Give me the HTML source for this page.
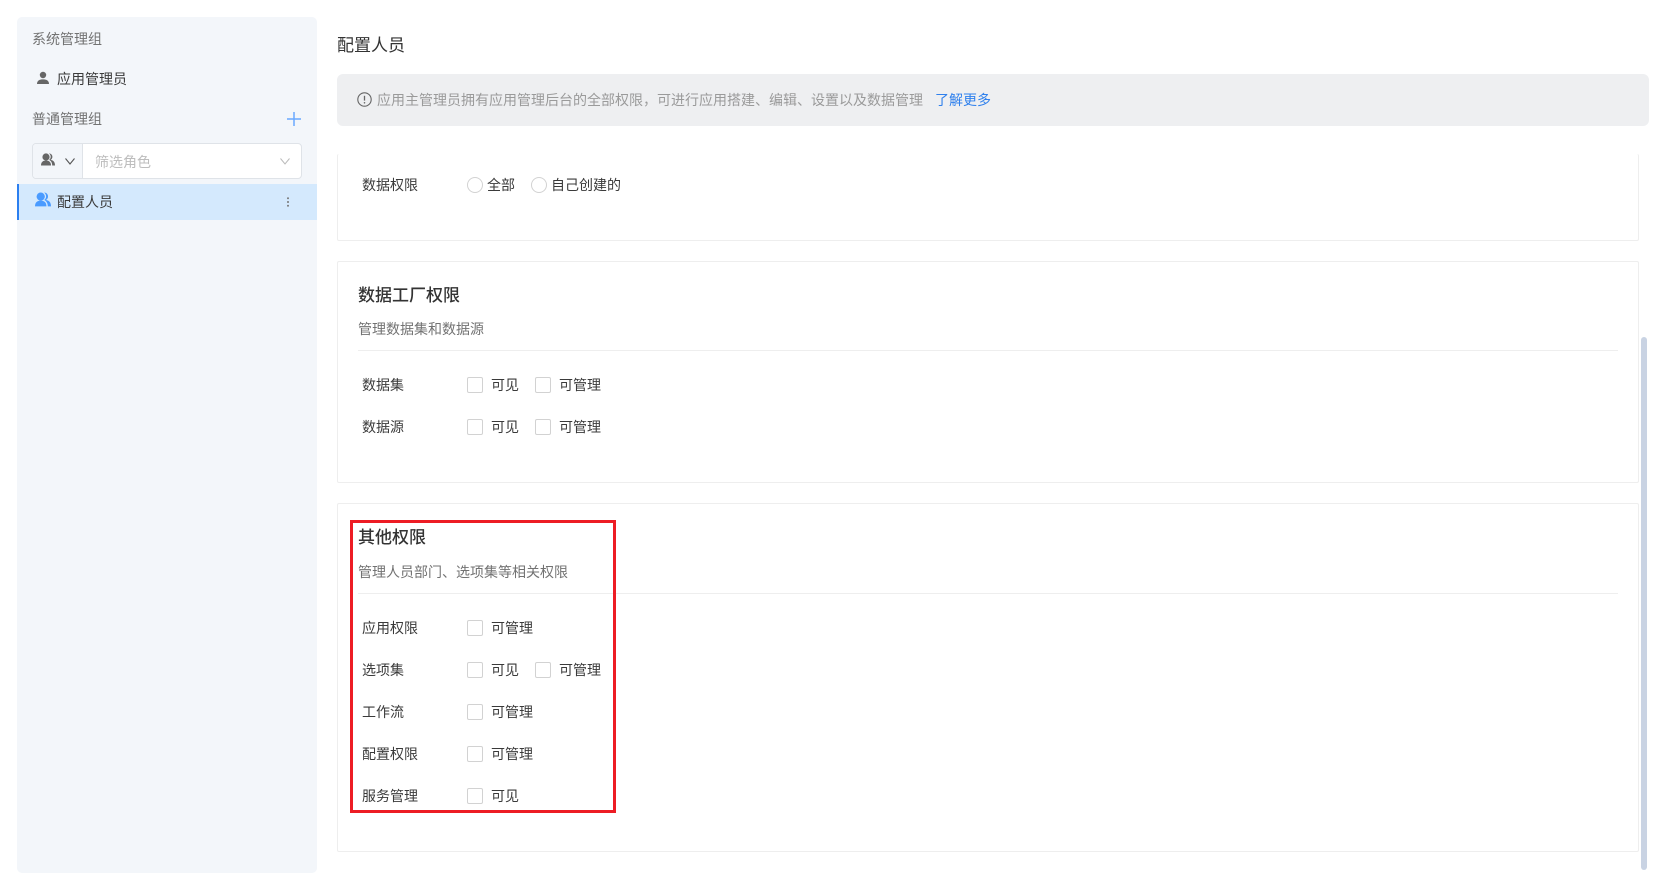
<!DOCTYPE html>
<html lang="zh"><head><meta charset="utf-8"><title>配置人员</title>
<style>
html,body{margin:0;padding:0;width:1662px;height:888px;overflow:hidden;background:#fff}
body{font-family:"Liberation Sans","Noto Sans CJK SC",sans-serif;font-size:14px;color:#3a3a3a;position:relative}
.a,.t,.cb,.rd{position:absolute;box-sizing:border-box}
.t{line-height:20px;white-space:nowrap}
.g{color:#727272}
.h{font-size:17px;font-weight:500;color:#333}
.cb{width:16px;height:16px;border:1px solid #d2d2d2;border-radius:2px;background:#fff}
.rd{width:16px;height:16px;border:1px solid #d2d2d2;border-radius:50%;background:#fff}
.card{position:absolute;left:337px;width:1302px;border:1px solid #eeeeee;border-radius:2px;box-sizing:border-box;background:#fff}
.hr{position:absolute;left:358px;width:1260px;height:1px;background:#eeeeee}
</style></head><body>

<!-- sidebar -->
<div class="a" style="left:17px;top:17px;width:300px;height:856px;background:#f3f6fa;border-radius:5px"></div>
<div class="t g" style="left:32px;top:29px">系统管理组</div>
<svg class="a" style="left:36px;top:71px" width="14" height="14" viewBox="0 0 14 14"><circle cx="7" cy="4" r="3.2" fill="#666"/><path d="M1 13c0-3.400 2.600-4.600 6-4.600s6 1.200 6 4.600z" fill="#666"/></svg>
<div class="t" style="left:57px;top:69px">应用管理员</div>
<div class="t g" style="left:32px;top:109px">普通管理组</div>
<svg class="a" style="left:287px;top:112px" width="14" height="14" viewBox="0 0 14 14"><path d="M7 0v14M0 7h14" stroke="#6aa9ff" stroke-width="1.500"/></svg>

<div class="a" style="left:32px;top:143px;width:270px;height:36px;border:1px solid #dfe3e8;border-radius:4px;background:#fff"></div>
<div class="a" style="left:33px;top:144px;width:50px;height:34px;background:#f3f6fa;border-right:1px solid #dfe3e8;border-radius:3px 0 0 3px"></div>
<svg class="a" style="left:41px;top:153px" width="14" height="13" viewBox="0 0 14 13"><circle cx="5" cy="4" r="3.600" fill="#666"/><path d="M0 12.500c0-3.500 2-5 5-5s5 1.500 5 5z" fill="#666"/><path d="M8 .4c2.200.2 3.400 1.600 3.400 3.500 0 1.300-.7 2.400-1.800 3 2.700.4 4.400 2 4.400 5.600h-2.800c0-2.800-1.300-4.800-3.100-5.600 1.100-.8 1.600-1.900 1.600-3.100 0-1.400-.6-2.500-1.700-3.400z" fill="#666"/></svg>
<svg class="a" style="left:65px;top:158px" width="10" height="7" viewBox="0 0 10 7"><path d="M.5 .5L5 6l4.500-5.500" fill="none" stroke="#555" stroke-width="1.100"/></svg>
<div class="t" style="left:95px;top:152px;color:#bdbdbd">筛选角色</div>
<svg class="a" style="left:280px;top:158px" width="10" height="7" viewBox="0 0 10 7"><path d="M.5 .5L5 6l4.500-5.500" fill="none" stroke="#bbb" stroke-width="1"/></svg>

<div class="a" style="left:17px;top:184px;width:300px;height:36px;background:#d4e9fd;border-left:2px solid #2b7ff0"></div>
<svg class="a" style="left:35px;top:192px" width="16" height="15" viewBox="0 0 14 13"><circle cx="5" cy="4" r="3.600" fill="#4a9bff"/><path d="M0 12.500c0-3.500 2-5 5-5s5 1.500 5 5z" fill="#4a9bff"/><path d="M8 .4c2.200.2 3.400 1.600 3.400 3.500 0 1.300-.7 2.400-1.800 3 2.700.4 4.400 2 4.400 5.600h-2.800c0-2.800-1.300-4.800-3.100-5.600 1.100-.8 1.600-1.900 1.600-3.100 0-1.400-.6-2.500-1.700-3.400z" fill="#4a9bff"/></svg>
<div class="t" style="left:57px;top:192px">配置人员</div>
<svg class="a" style="left:286px;top:197px" width="4" height="10" viewBox="0 0 4 10"><circle cx="2" cy="1.200" r="1" fill="#777"/><circle cx="2" cy="5" r="1" fill="#777"/><circle cx="2" cy="8.800" r="1" fill="#777"/></svg>

<!-- main head -->
<div class="t" style="left:337px;top:36px;font-size:17px;color:#333">配置人员</div>
<div class="a" style="left:337px;top:74px;width:1312px;height:52px;background:#eeeff1;border-radius:6px"></div>
<svg class="a" style="left:357px;top:92px" width="15" height="15" viewBox="0 0 15 15"><circle cx="7.500" cy="7.500" r="6.700" fill="none" stroke="#666" stroke-width="1.100"/><path d="M7.500 3.800v4.800" stroke="#666" stroke-width="1.300"/><circle cx="7.500" cy="10.800" r=".8" fill="#666"/></svg>
<div class="t" style="left:377px;top:90px;color:#9a9a9a">应用主管理员拥有应用管理后台的全部权限，可进行应用搭建、编辑、设置以及数据管理</div>
<div class="t" style="left:935px;top:90px;color:#2f80ed">了解更多</div>

<!-- card 1 -->
<div class="card" style="top:154px;height:87px;border-top:none"></div>
<div class="t" style="left:362px;top:175px">数据权限</div>
<div class="rd" style="left:467px;top:177px"></div>
<div class="t" style="left:487px;top:175px">全部</div>
<div class="rd" style="left:531px;top:177px"></div>
<div class="t" style="left:551px;top:175px">自己创建的</div>

<!-- card 2 -->
<div class="card" style="top:261px;height:222px"></div>
<div class="t h" style="left:358px;top:286px">数据工厂权限</div>
<div class="t g" style="left:358px;top:319px">管理数据集和数据源</div>
<div class="hr" style="top:350px"></div>
<div class="t" style="left:362px;top:375px">数据集</div>
<div class="cb" style="left:467px;top:377px"></div><div class="t" style="left:491px;top:375px">可见</div>
<div class="cb" style="left:535px;top:377px"></div><div class="t" style="left:559px;top:375px">可管理</div>
<div class="t" style="left:362px;top:417px">数据源</div>
<div class="cb" style="left:467px;top:419px"></div><div class="t" style="left:491px;top:417px">可见</div>
<div class="cb" style="left:535px;top:419px"></div><div class="t" style="left:559px;top:417px">可管理</div>

<!-- card 3 -->
<div class="card" style="top:503px;height:349px"></div>
<div class="t h" style="left:358px;top:528px">其他权限</div>
<div class="t g" style="left:358px;top:562px">管理人员部门、选项集等相关权限</div>
<div class="hr" style="top:593px"></div>
<div class="t" style="left:362px;top:618px">应用权限</div>
<div class="cb" style="left:467px;top:620px"></div><div class="t" style="left:491px;top:618px">可管理</div>
<div class="t" style="left:362px;top:660px">选项集</div>
<div class="cb" style="left:467px;top:662px"></div><div class="t" style="left:491px;top:660px">可见</div>
<div class="cb" style="left:535px;top:662px"></div><div class="t" style="left:559px;top:660px">可管理</div>
<div class="t" style="left:362px;top:702px">工作流</div>
<div class="cb" style="left:467px;top:704px"></div><div class="t" style="left:491px;top:702px">可管理</div>
<div class="t" style="left:362px;top:744px">配置权限</div>
<div class="cb" style="left:467px;top:746px"></div><div class="t" style="left:491px;top:744px">可管理</div>
<div class="t" style="left:362px;top:786px">服务管理</div>
<div class="cb" style="left:467px;top:788px"></div><div class="t" style="left:491px;top:786px">可见</div>

<!-- red highlight -->
<div class="a" style="left:350px;top:520px;width:266px;height:293px;border:3px solid #ed1c24"></div>

<!-- scrollbar -->
<div class="a" style="left:1641px;top:337px;width:6px;height:533px;background:#c9d3e3;border-radius:3px"></div>
</body></html>
